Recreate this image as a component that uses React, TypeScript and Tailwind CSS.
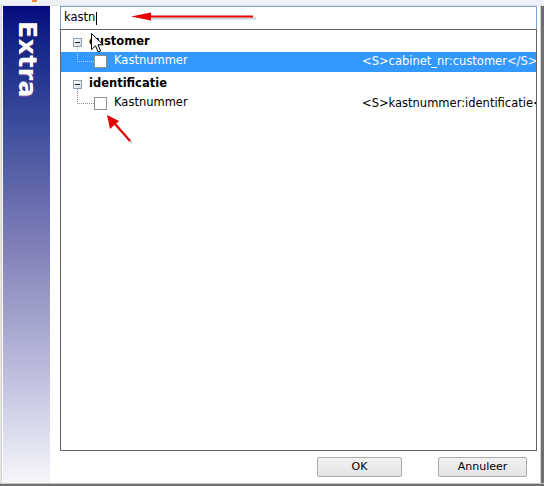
import React from "react";

const font = { fontFamily: '"DejaVu Sans", Verdana, sans-serif' };

const ExpandBox: React.FC = () => (
    <span className="flex items-center justify-center w-[9px] h-[9px] border border-[#8f9cac] bg-gradient-to-br from-white to-[#d5dbe3]">
        <span className="w-[5px] h-[1px] bg-[#1a1a1a]" />
    </span>
);

const CheckBox: React.FC = () => (
    <span className="mt-[3px] w-[13px] h-[13px] border border-[#8e8f8f] bg-white shrink-0" />
);

type Item = { group: string; label: string; tag: string; selected?: boolean };

const items: Item[] = [
    { group: "customer", label: "Kastnummer", tag: "<S>cabinet_nr:customer</S>", selected: true },
    { group: "identificatie", label: "Kastnummer", tag: "<S>kastnummer:identificatie</S>" },
];

const TreeGroup: React.FC<{ item: Item; first?: boolean }> = ({ item, first }) => (
    <div className={first ? "" : "mt-[2px]"}>
        <div className="flex items-center h-[20px] pl-[12px]">
            <ExpandBox />
            <span className="ml-[7px] font-bold text-black text-[11.5px]">{item.group}</span>
        </div>
        <div
            className={`flex items-start h-[20px] ${item.selected ? "bg-[#3399ff] text-white" : "text-black"}`}
        >
            <div className="flex items-start w-[301px] shrink-0">
                <span
                    className={`ml-[16px] -mt-[5px] w-[17px] h-[15px] border-l border-b border-dotted ${item.selected ? "border-[#b8d6ff]" : "border-[#8a8a8a]"}`}
                />
                <CheckBox />
                <span className="ml-[7px] self-center text-[11.5px]">{item.label}</span>
            </div>
            <div className="flex-1 min-w-0 self-center overflow-hidden whitespace-nowrap text-[11.5px]">
                {item.tag}
            </div>
        </div>
    </div>
);

const Btn: React.FC<{ label: string; w: string }> = ({ label, w }) => (
    <button
        className={`${w} h-[20px] rounded-[2px] border border-[#acacac] bg-gradient-to-b from-[#f2f2f2] to-[#e4e4e4] text-[11px] text-black`}
    >
        {label}
    </button>
);

export default function App() {
    return (
        <div className="relative w-[544px] h-[486px] bg-white flex flex-col overflow-hidden" style={font}>
            {/* window top edge */}
            <div className="h-[6px] bg-[#eef1f5] border-b border-[#dde3ea] flex">
                <span className="ml-[32px] w-[5px] h-[2px] bg-[#f08a4b]" />
            </div>

            <div className="flex flex-1 min-h-0">
                <div className="w-[3px] flex">
                    <span className="w-[1px] bg-[#e6e6e6]" />
                    <span className="w-[1px] bg-[#d2d2d2]" />
                    <span className="w-[1px] bg-white" />
                </div>

                {/* side banner */}
                <div className="w-[47px] bg-gradient-to-b from-[#08087e] via-[#7f7fb7] to-[#f6f6fb] flex justify-center pt-[15px] pl-[2px]">
                    <span className="[writing-mode:vertical-rl] text-white font-bold text-[25px] leading-none tracking-[0.5px] [text-shadow:1px_0_0_rgba(255,120,160,0.45)]">
                        Extra
                    </span>
                </div>

                {/* content */}
                <div className="w-[490px] flex flex-col pl-[10px]">
                    <div className="w-[477px] h-[23px] border-t border-l border-r border-[#7da2ce] flex items-center pl-[3px] text-[11.5px] text-black">
                        kastn
                        <span className="ml-[1px] w-[1px] h-[13px] bg-black" />
                    </div>
                    <div className="w-[477px] h-[422px] border border-[#646464] pt-[2px] overflow-hidden">
                        {items.map((it, i) => (
                            <TreeGroup key={it.group} item={it} first={i === 0} />
                        ))}
                    </div>
                    <div className="flex justify-end gap-[36px] mt-[6px] mr-[13px]">
                        <Btn label="OK" w="w-[85px]" />
                        <Btn label="Annuleer" w="w-[89px]" />
                    </div>
                </div>

                <div className="w-[4px] flex">
                    <span className="w-[1px] bg-[#cfcfcf]" />
                    <span className="w-[3px] bg-[#6f6f6f]" />
                </div>
            </div>

            <div className="h-[1px] bg-[#c8c8c8]" />
            <div className="h-[2px] bg-[#707070]" />

            {/* mouse pointer */}
            <svg className="absolute left-[91px] top-[33px]" width="14" height="21" viewBox="0 0 14 21">
                <path
                    d="M0.5 0.5 L0.5 16.5 L4.5 12.8 L7.2 19 L9.6 18 L7 11.8 L12.2 11.8 Z"
                    fill="white"
                    stroke="black"
                    strokeWidth="1"
                    strokeLinejoin="miter"
                />
            </svg>

            {/* annotation arrows */}
            <svg className="absolute left-0 top-0 pointer-events-none" width="544" height="486">
                <g opacity="0.35" fill="#777" stroke="#777">
                    <line x1="150" y1="18.5" x2="256" y2="18.5" strokeWidth="2" />
                    <line x1="112" y1="119" x2="132" y2="143" strokeWidth="2" />
                </g>
                <g fill="#e60000" stroke="#e60000">
                    <line x1="148" y1="16.5" x2="253" y2="16.5" strokeWidth="2" />
                    <polygon points="131,16.5 151,12.5 151,20.5" stroke="none" />
                    <line x1="115" y1="124" x2="130" y2="141" strokeWidth="2" />
                    <polygon points="107,115 110,129 119,121" stroke="none" />
                </g>
            </svg>
        </div>
    );
}
